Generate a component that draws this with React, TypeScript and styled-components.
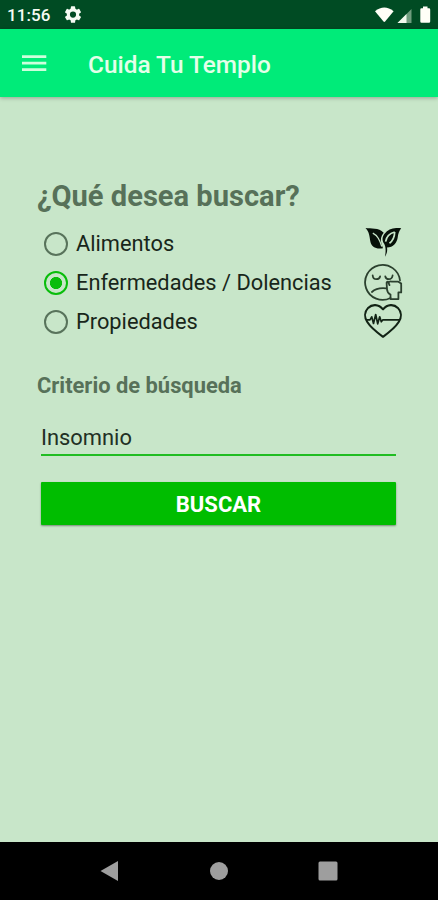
import React, { useState } from "react";
import styled, { createGlobalStyle } from "styled-components";

const GlobalStyle = createGlobalStyle`
  * { box-sizing: border-box; }
  body { margin: 0; background: #c8e6c9; font-family: Roboto, sans-serif; }
`;

const Screen = styled.div`
  width: 438px;
  height: 900px;
  display: flex;
  flex-direction: column;
  overflow: hidden;
  background: #c8e6c9;
`;

const StatusBar = styled.div`
  height: 29px;
  flex: none;
  display: flex;
  align-items: center;
  padding: 1px 6px 0 7px;
  background: #004b23;
  color: #f6fbf4;
  svg { display: block; }
`;

const Clock = styled.span`
  width: 57px;
  font-size: 17px;
  line-height: 20px;
  font-weight: 500;
  letter-spacing: 0.1px;
`;

const StatusIcons = styled.div`
  margin-left: auto;
  display: flex;
  align-items: center;
`;

const AppBar = styled.header`
  height: 68px;
  flex: none;
  display: flex;
  align-items: center;
  padding: 3px 22px 0;
  background: #00eb79;
  box-shadow: 0 1px 4px rgba(0, 0, 0, 0.28);
`;

const MenuButton = styled.button`
  width: 66px;
  height: 30px;
  padding: 0;
  border: 0;
  background: none;
  svg { display: block; }
`;

const Title = styled.h1`
  margin: 0;
  color: #e4ffe9;
  font-size: 24.4px;
  line-height: 30px;
  font-weight: 500;
  white-space: nowrap;
`;

const Main = styled.main`
  flex: 1;
  padding: 80px 35px 0 37px;
`;

const Heading = styled.h2`
  margin: 0;
  color: #577159;
  font-size: 29.1px;
  line-height: 38px;
  font-weight: 700;
  white-space: nowrap;
`;

const Options = styled.div`
  display: flex;
  justify-content: space-between;
  margin-top: 9px;
`;

const RadioList = styled.div`
  display: flex;
  flex-direction: column;
`;

const Option = styled.label`
  height: 39px;
  display: flex;
  align-items: center;
  padding-left: 7px;
  gap: 8px;
  color: #18261a;
  font-size: 21.8px;
  line-height: 28px;
  white-space: nowrap;
`;

const OptionText = styled.span`
  padding-top: 1px;
`;

const Radio = styled.input`
  appearance: none;
  flex: none;
  width: 24px;
  height: 24px;
  margin: 0;
  border: 2px solid #58735b;
  border-radius: 50%;
  &:checked {
    border-color: #09bd0b;
    background: radial-gradient(circle, #09bd0b 0 5.7px, transparent 6.4px);
  }
`;

const IconList = styled.div`
  width: 40px;
  display: flex;
  flex-direction: column;
  svg { display: block; }
`;

const FieldLabel = styled.label`
  display: block;
  margin-top: 30px;
  color: #577159;
  font-size: 21.9px;
  line-height: 30px;
  font-weight: 700;
  white-space: nowrap;
`;

const SearchInput = styled.input`
  display: block;
  width: 355px;
  height: 38px;
  margin: 17px 0 0 4px;
  padding: 2px 0 0;
  border: 0;
  border-bottom: 2px solid #20bd22;
  border-radius: 0;
  outline: none;
  background: none;
  color: #223024;
  font: 400 21.9px Roboto, sans-serif;
`;

const SearchButton = styled.button`
  display: block;
  width: 355px;
  height: 43px;
  margin: 26px 0 0 4px;
  padding: 2px 0 0;
  border: 0;
  border-radius: 1px;
  background: #00bd00;
  color: #fff;
  font: 700 22px Roboto, sans-serif;
  box-shadow: 0 1px 2px rgba(0, 0, 0, 0.4);
`;

const NavBar = styled.nav`
  height: 58px;
  flex: none;
  display: flex;
  align-items: center;
  justify-content: center;
  gap: 90px;
  background: #000;
  svg { display: block; }
`;

const GearIcon = () => (
  <svg width="18" height="18" viewBox="1.5 2 21 21" fill="currentColor">
    <path
      fillRule="evenodd"
      d="M19.14 12.94c.04-.3.06-.61.06-.94s-.02-.64-.07-.94l2.03-1.58a.49.49 0 0 0 .12-.61l-1.92-3.32a.49.49 0 0 0-.59-.22l-2.39.96a7 7 0 0 0-1.62-.94l-.36-2.54A.48.48 0 0 0 13.92 2.4h-3.84a.48.48 0 0 0-.47.41l-.36 2.54c-.59.24-1.13.57-1.62.94l-2.39-.96a.49.49 0 0 0-.59.22L2.73 8.87a.49.49 0 0 0 .12.61l2.03 1.58a6 6 0 0 0 0 1.88l-2.03 1.58a.49.49 0 0 0-.12.61l1.92 3.32c.12.22.37.29.59.22l2.39-.96c.5.38 1.03.7 1.62.94l.36 2.54c.05.24.24.41.48.41h3.84c.24 0 .44-.17.47-.41l.36-2.54a7 7 0 0 0 1.62-.94l2.39.96c.22.08.47 0 .59-.22l1.92-3.32a.49.49 0 0 0-.12-.61ZM12 15.6a3.6 3.6 0 1 1 0-7.200 3.6 3.6 0 0 1 0 7.200Z"
    />
  </svg>
);

const SignalIcons = () => (
  <svg width="58" height="20" viewBox="0 0 58 20">
    <path d="M1 6.300Q10.300-1.200 19.600 6.300L11.100 16.500Q10.300 17.300 9.500 16.500Z" fill="#fffff7" />
    <path d="M23.500 18 37.500 4V18Z" fill="#6f9d7e" />
    <path d="M23.500 18 32.500 9V18Z" fill="#f2faee" />
    <path d="M49 1.500h4.500v1.700H55q1.200 0 1.200 1.300v12q0 1.300-1.200 1.300h-7.500q-1.200 0-1.200-1.300v-12q0-1.300 1.200-1.300H49Z" fill="#fffff7" />
  </svg>
);

const MenuIcon = () => (
  <svg width="25" height="30" fill="#ceffdc">
    <path d="M0 5.200h24.300v2.800H0ZM0 11.800h24.300v2.800H0ZM0 18.300h24.300v2.800H0Z" />
  </svg>
);

const LeafIcon = () => (
  <svg width="40" height="39" viewBox="0 0 40 39">
    <path d="M2.500 4C8 4.900 15.500 3.300 20.700 8.700C17.900 12 17.200 15.500 18.400 19.600L20 24.200C13.500 25.500 8.400 23.300 7.300 17.300C6.500 12.600 6.300 7.600 2.500 4Z" fill="#071109" />
    <path d="M38.200 4.200C33 3.500 26.200 4.400 22.800 8.400C18.800 12.200 18.700 16.200 21.200 19.800C22.800 23 23 27 22 32.700C24.100 29.600 24.500 26.500 24 23.600C30.300 23.200 33.900 19 34.700 13.500C35 10 36.200 6.700 38.200 4.200Z" fill="#071109" />
    <path d="M9.800 9.200C14.700 11.700 16.500 15.700 18.800 22.500" fill="none" stroke="#c8e6c9" strokeWidth="1.300" />
    <path d="M31.700 8C26.800 9.300 23.500 12.100 22.600 17.600M31.700 8Q31.500 15.500 26.500 19.200" fill="none" stroke="#c8e6c9" strokeWidth="1.700" />
  </svg>
);

const SickFaceIcon = () => (
  <svg width="40" height="39" viewBox="0 0 40 39" fill="none" stroke="#2b402e" strokeWidth="1.800" strokeLinecap="round" strokeLinejoin="round">
    <path d="M37 17.500A17.500 17.500 0 1 0 27.500 35" />
    <path d="M9.700 12.500q.3 3.700 3.700 3.700 3.100 0 3.700-2.700M22.300 13.500q.6 2.700 3.500 2.700 3.300 0 3.800-3.700" />
    <path d="M8.900 29q5-4.800 14.500-3.700" />
    <path d="M38.200 20.500v8.900h-2.800v6.700h-7.900V31.500q-3.200-1.200-3.500-5.300l-.4-6.300q.1-1.500 1.400-1.300l1.500 3.500M26 19q1.700-1 2.900-.3h6.200q1.600.6 3.100 2.200" />
  </svg>
);

const HeartPulseIcon = () => (
  <svg width="40" height="39" viewBox="0 0 40 39" fill="none" stroke="#122315" strokeLinejoin="round">
    <path d="M20 7.300C15.500 1.900 9 2 5.100 5.900C1.300 9.900 1.300 15.500 4.300 20Q8 26 20 34.800Q32 26 35.700 20C38.700 15.500 38.700 9.900 34.900 5.900C31 2 24.500 1.900 20 7.300Z" strokeWidth="2.100" />
    <path d="M3 17.800h4l1.700-3 1.800 6.700 2.200-9 2 9.300 2-7 1.600 5 1.600-2H37" strokeWidth="1.700" />
  </svg>
);

const choices = ["Alimentos", "Enfermedades / Dolencias", "Propiedades"];

export default function App() {
  const [selected, setSelected] = useState(choices[1]);
  const [query, setQuery] = useState("Insomnio");

  return (
    <>
      <GlobalStyle />
      <Screen>
        <StatusBar>
          <Clock>11:56</Clock>
          <GearIcon />
          <StatusIcons><SignalIcons /></StatusIcons>
        </StatusBar>
        <AppBar>
          <MenuButton aria-label="Menú"><MenuIcon /></MenuButton>
          <Title>Cuida Tu Templo</Title>
        </AppBar>
        <Main>
          <Heading>¿Qué desea buscar?</Heading>
          <Options>
            <RadioList>
              {choices.map((choice) => (
                <Option key={choice}>
                  <Radio
                    type="radio"
                    name="category"
                    checked={selected === choice}
                    onChange={() => setSelected(choice)}
                  />
                  <OptionText>{choice}</OptionText>
                </Option>
              ))}
            </RadioList>
            <IconList>
              <LeafIcon />
              <SickFaceIcon />
              <HeartPulseIcon />
            </IconList>
          </Options>
          <FieldLabel htmlFor="query">Criterio de búsqueda</FieldLabel>
          <SearchInput id="query" value={query} onChange={(e) => setQuery(e.target.value)} />
          <SearchButton>BUSCAR</SearchButton>
        </Main>
        <NavBar>
          <svg width="20" height="22" fill="#9e9e9e"><path d="M.5 11 18 1V21Z" /></svg>
          <svg width="18" height="20" fill="#9e9e9e"><circle cx="9" cy="10" r="9" /></svg>
          <svg width="20" height="20" fill="#9e9e9e"><rect x=".5" y=".5" width="19" height="19" rx="1.500" /></svg>
        </NavBar>
      </Screen>
    </>
  );
}
